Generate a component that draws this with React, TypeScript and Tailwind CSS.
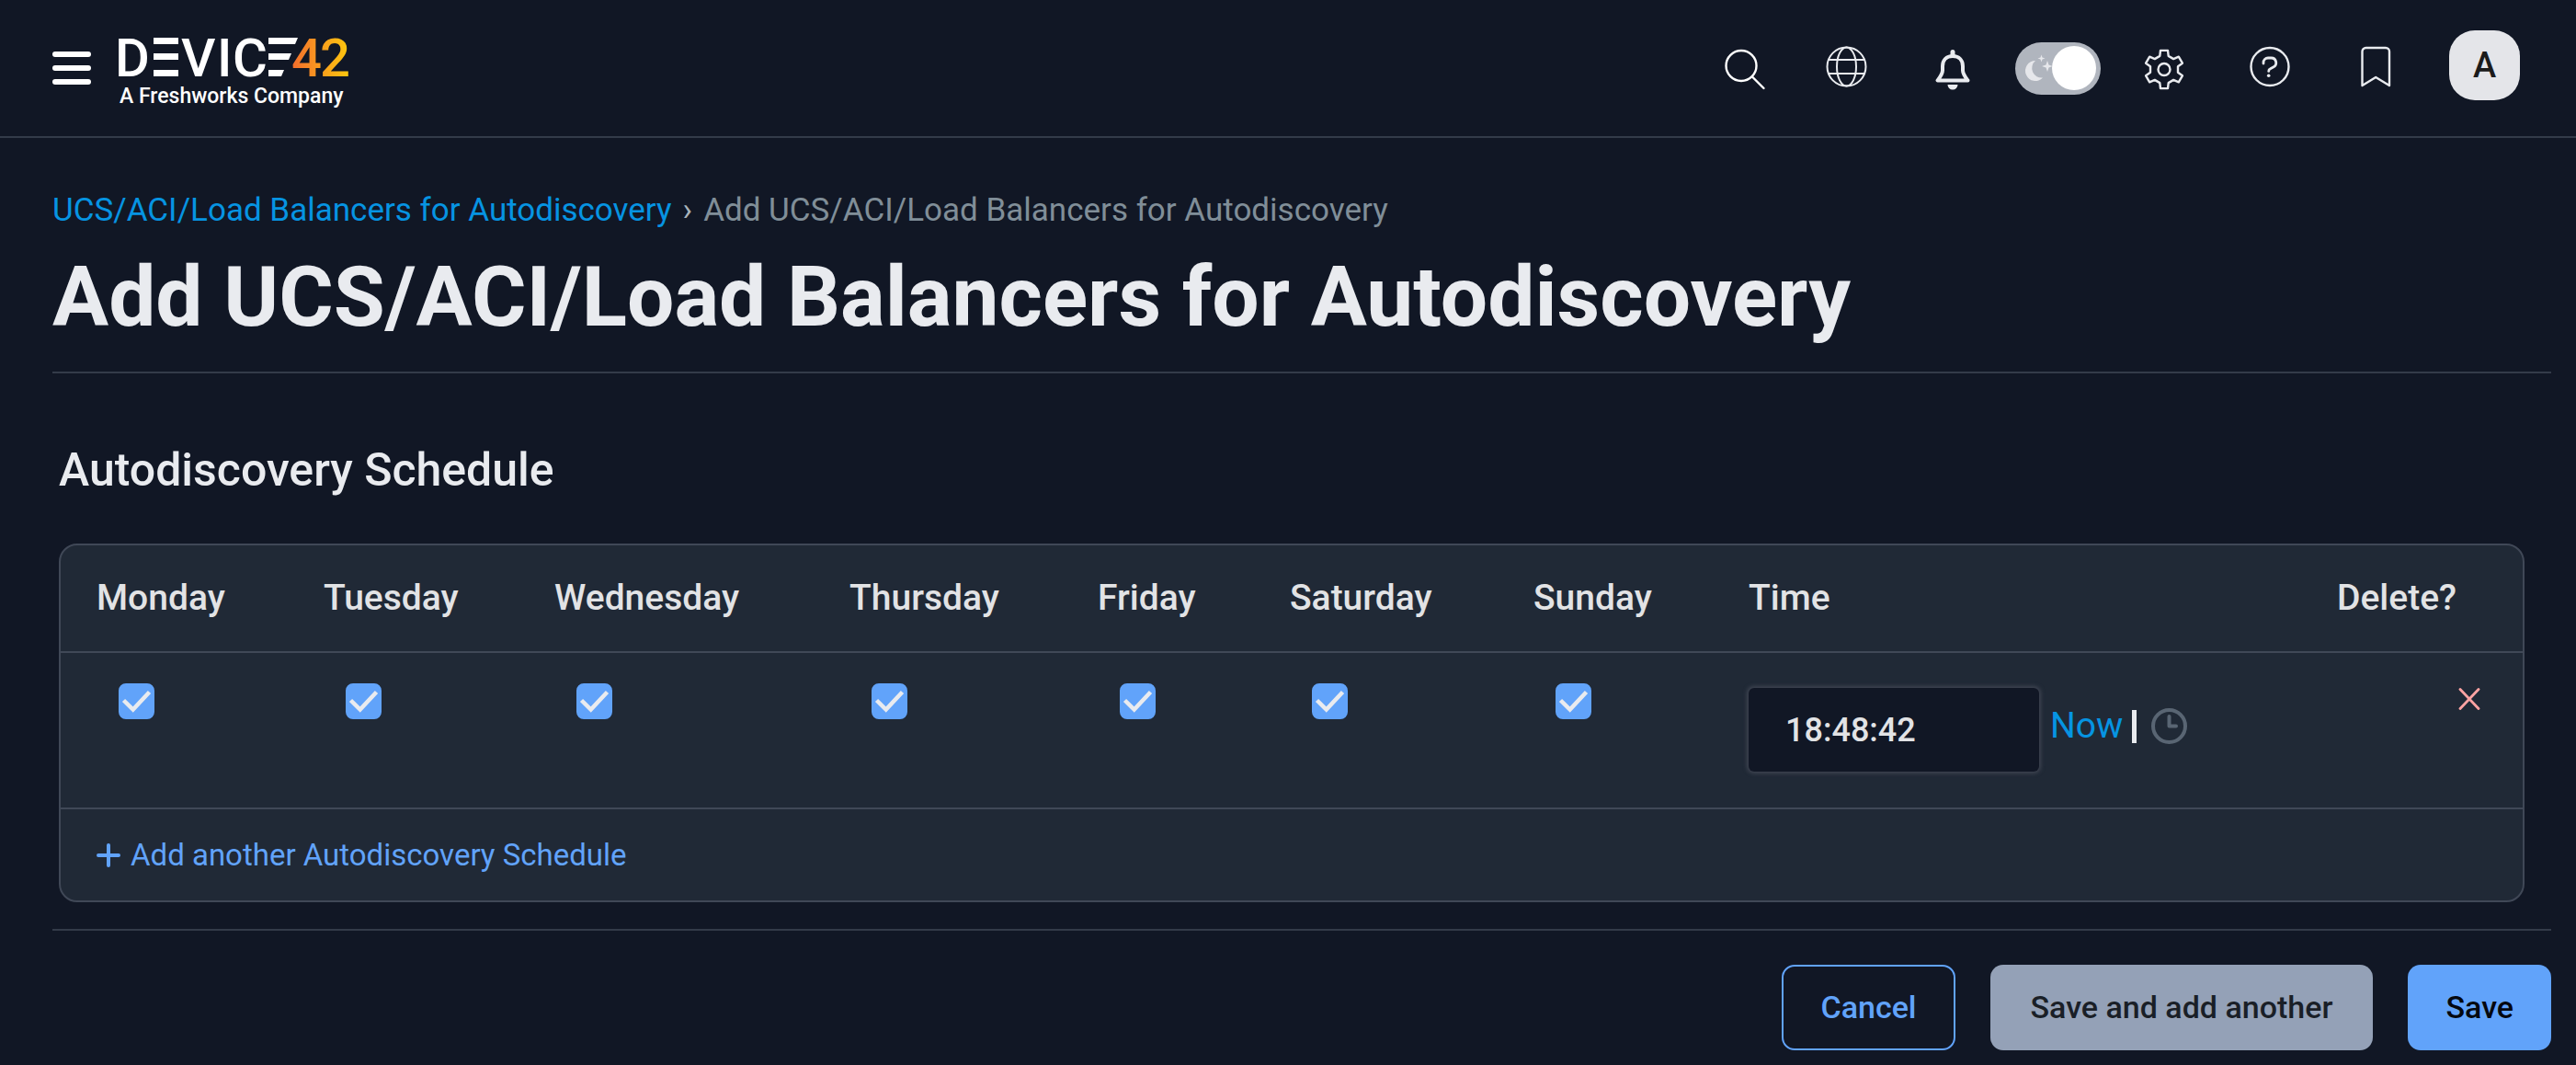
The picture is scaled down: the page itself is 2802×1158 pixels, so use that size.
import React, { useState } from 'react';

const days = [
  { name: 'Monday', col: 'w-[286px]' },
  { name: 'Tuesday', col: 'w-[251px]' },
  { name: 'Wednesday', col: 'w-[321px]' },
  { name: 'Thursday', col: 'w-[270px]' },
  { name: 'Friday', col: 'w-[209px]' },
  { name: 'Saturday', col: 'w-[265px]' },
  { name: 'Sunday', col: 'w-[234px]' },
];

// six-toothed gear outline, one tooth every 60 degrees
const gearPoints = [0, 60, 120, 180, 240, 300]
  .flatMap((a) => [
    [15.3, a - 18],
    [21, a - 11],
    [21, a + 11],
    [15.3, a + 18],
  ])
  .map(([r, deg]) => {
    const t = (deg * Math.PI) / 180;
    return `${(24 + r * Math.sin(t)).toFixed(1)},${(25.5 - r * Math.cos(t)).toFixed(1)}`;
  })
  .join(' ');

interface IconButtonProps {
  label: string;
  className?: string;
  children: React.ReactNode;
}

const IconButton: React.FC<IconButtonProps> = ({ label, className = 'w-[115px]', children }) => (
  <button type="button" aria-label={label} className={`flex justify-center text-[#e9ebef] ${className}`}>
    <svg width="48" height="48" viewBox="0 0 48 48" fill="none" stroke="currentColor" strokeLinecap="round" strokeLinejoin="round">
      {children}
    </svg>
  </button>
);

const Logo: React.FC = () => (
  <svg width="268" height="90" viewBox="-6 0 268 90" fill="#fff" role="img" aria-label="Device42, A Freshworks Company">
    <defs>
      <linearGradient id="digits" gradientUnits="userSpaceOnUse" x1="190" y1="0" x2="252" y2="0">
        <stop offset="0" stopColor="#f36f2c" />
        <stop offset="0.45" stopColor="#f99a1f" />
        <stop offset="1" stopColor="#fec90d" />
      </linearGradient>
    </defs>
    <g fontFamily="Roboto, sans-serif" fontWeight="500" fontSize="58">
      <text x="-4" y="54">D</text>
      <text x="68" y="54">V</text>
      <text x="107" y="54">I</text>
      <text x="124" y="54">C</text>
      <text x="188" y="54" fill="url(#digits)">4</text>
      <text x="219" y="54" fill="url(#digits)">2</text>
    </g>
    <path d="M38 12h27v7H38zM38 29h27v7H38zM38 47h27v7H38z" />
    <path d="M163 12h32l-3 7h-29zM163 29h25l-3 7h-22zM163 47h17l-3 7h-14z" />
    <text x="1" y="83" fontFamily="Roboto, sans-serif" fontWeight="500" fontSize="23">A Freshworks Company</text>
  </svg>
);

const Header: React.FC = () => {
  const [dark, setDark] = useState(true);

  return (
    <header className="flex h-[150px] items-center border-b-2 border-[#333b49] pl-[57px] pr-[38px]">
      <button type="button" aria-label="Menu" className="flex w-[42px] flex-col gap-[9px]">
        <span className="h-1.5 rounded-full bg-white" />
        <span className="h-1.5 rounded-full bg-white" />
        <span className="h-1.5 rounded-full bg-white" />
      </button>
      <a href="#" className="ml-6">
        <Logo />
      </a>

      <div className="ml-auto flex items-center">
        <IconButton label="Search" className="w-[107px]">
          <g stroke="#fff" strokeWidth="2.4">
            <circle cx="20" cy="21.5" r="16.5" />
            <path d="M32 33.5 44.5 46" />
          </g>
        </IconButton>
        <IconButton label="Language">
          <g strokeWidth="2">
            <circle cx="23.5" cy="22.5" r="21" />
            <ellipse cx="23.5" cy="22.5" rx="10.5" ry="21" />
            <path d="M4 15h39M4 30h39" />
          </g>
        </IconButton>
        <IconButton label="Notifications">
          <path
            strokeWidth="4"
            d="M24 11c-7 0-11 4.500-11 11v4.500c0 4-2.500 7-5.500 11h33c-3-4-5.500-7-5.500-11V22c0-6.500-4-11-11-11z"
          />
          <path fill="currentColor" stroke="none" d="M21.500 10V6.500a2.500 2.500 0 0 1 5 0V10zM18.500 42h11a5.500 5.500 0 0 1-11 0z" />
        </IconButton>

        <div className="flex w-[115px] justify-center">
          <button
            type="button"
            role="switch"
            aria-checked={dark}
            aria-label="Dark mode"
            onClick={() => setDark(!dark)}
            className="flex h-[57px] w-[93px] items-center rounded-full bg-[#b0b5be]"
          >
            <svg width="40" height="57" viewBox="0 0 40 57" fill="#e6e7eb">
              <path d="M22 20a11 11 0 1 0 8 18.500A10.500 10.500 0 0 1 22 20z" />
              <path d="M28.500 13.500l1 3 3 1-3 1-1 3-1-3-3-1 3-1zM35 20l1.500 4.500 4.500 1.500-4.500 1.500-1.500 4.500-1.500-4.500-4.500-1.500 4.500-1.500z" />
            </svg>
            <span className="size-12 rounded-full bg-white" />
          </button>
        </div>

        <IconButton label="Settings">
          <g strokeWidth="2.4">
            <polygon points={gearPoints} />
            <circle cx="24" cy="25.5" r="6.5" />
          </g>
        </IconButton>
        <IconButton label="Help">
          <circle cx="24" cy="22.5" r="20.5" strokeWidth="2.4" />
          <path strokeWidth="2.8" d="M17 19v-1a5 5 0 0 1 5-5h3.500a5.300 5.300 0 0 1 2.200 10.100L24.500 24.700a3 3 0 0 0-1.800 2.700" />
          <circle cx="22.7" cy="32.3" r="1.8" fill="currentColor" stroke="none" />
        </IconButton>
        <IconButton label="Bookmarks">
          <path strokeWidth="2.4" d="M9.500 43V6a4 4 0 0 1 4-4H35a4 4 0 0 1 4 4v37L24.200 34z" />
        </IconButton>

        <div className="flex w-[123px] justify-center pb-1.5">
          <button
            type="button"
            aria-label="Account"
            className="h-[76px] w-[77px] rounded-[28px] bg-[#e4e5e9] text-[38px] font-medium text-[#1b1b1b]"
          >
            A
          </button>
        </div>
      </div>
    </header>
  );
};

const DayCheckbox: React.FC<{ day: string }> = ({ day }) => {
  const [checked, setChecked] = useState(true);

  return (
    <span className="ml-6 grid size-[39px]">
      <input
        type="checkbox"
        aria-label={day}
        checked={checked}
        onChange={() => setChecked(!checked)}
        className="col-start-1 row-start-1 size-[39px] appearance-none rounded-lg border-2 border-[#61a3fa] checked:bg-[#61a3fa]"
      />
      {checked && (
        <svg viewBox="0 0 39 39" className="pointer-events-none col-start-1 row-start-1 size-[39px]" fill="none" stroke="#e9ebef" strokeWidth="4.5">
          <path d="M5.500 18.500 15.700 28.500 33.500 9.500" />
        </svg>
      )}
    </span>
  );
};

const ScheduleTable: React.FC = () => {
  const [time, setTime] = useState('18:48:42');

  return (
    <div className="overflow-hidden rounded-[20px] border-2 border-[#404857] bg-[#202936]">
      <table className="w-full table-fixed text-left">
        <colgroup>
          {days.map((day) => (
            <col key={day.name} className={day.col} />
          ))}
          <col />
          <col className="w-[202px]" />
        </colgroup>
        <thead>
          <tr className="h-[116px] border-b-2 border-[#404857] text-[39px] text-[#e2e3e5]">
            {days.map((day) => (
              <th key={day.name} scope="col" className="font-medium first:pl-[39px]">
                {day.name}
              </th>
            ))}
            <th scope="col" className="font-medium">Time</th>
            <th scope="col" className="font-medium">Delete?</th>
          </tr>
        </thead>
        <tbody>
          <tr className="h-[170px] border-b-2 border-[#404857] align-top">
            {days.map((day) => (
              <td key={day.name} className="pt-[33px] first:pl-[39px]">
                <DayCheckbox day={day.name} />
              </td>
            ))}
            <td className="pt-[38px]">
              <div className="flex items-center">
                <input
                  type="text"
                  aria-label="Time"
                  value={time}
                  onChange={(e) => setTime(e.target.value)}
                  className="h-[91px] w-[316px] rounded-md bg-[#111725] px-10 text-[36px] font-medium text-[#e2e3e5] shadow-[0_0_4px_2px_#3f4552]"
                />
                <div className="flex items-center pb-2">
                  <a
                    href="#"
                    onClick={() => setTime(new Date().toTimeString().slice(0, 8))}
                    className="ml-3 text-[39px] text-[#0694e2]"
                  >
                    Now
                  </a>
                  <span className="ml-2.5 h-9 w-[5px] bg-[#e9ebef]" />
                  <button type="button" aria-label="Choose a time" className="ml-4">
                    <svg width="39" height="39" viewBox="0 0 39 39" fill="none" stroke="#596573" strokeWidth="4" strokeLinecap="round" strokeLinejoin="round">
                      <circle cx="19.5" cy="19.5" r="17.5" />
                      <path d="M19.500 9v10.500H27" />
                    </svg>
                  </button>
                </div>
              </div>
            </td>
            <td className="pt-[38px] pr-[46px]">
              <button type="button" aria-label="Delete" className="ml-auto block">
                <svg width="24" height="24" viewBox="0 0 24 24" stroke="#ffa3a3" strokeWidth="2.8" strokeLinecap="round">
                  <path d="M2 1.500l20 21M22 1.500 2 22.500" />
                </svg>
              </button>
            </td>
          </tr>
        </tbody>
      </table>
      <a href="#" className="flex h-[99px] items-center gap-[11px] pl-[39px] text-[33px] text-[#61a3fa]">
        <svg width="26" height="26" viewBox="0 0 26 26" stroke="currentColor" strokeWidth="4" strokeLinecap="round">
          <path d="M13 2v22M2 13h22" />
        </svg>
        Add another Autodiscovery Schedule
      </a>
    </div>
  );
};

function App() {
  return (
    <div className="min-h-screen bg-[#111725] font-[Roboto,sans-serif]">
      <Header />
      <main className="pl-[57px] pr-[27px]">
        <nav aria-label="Breadcrumb" className="flex gap-3 pt-14 text-[35px] leading-[46px] text-[#808e98]">
          <a href="#" className="text-[#0694e2]">UCS/ACI/Load Balancers for Autodiscovery</a>
          <span className="text-[#a9b3bb]">›</span>
          <span>Add UCS/ACI/Load Balancers for Autodiscovery</span>
        </nav>
        <h1 className="h-[154px] border-b-2 border-[#333b49] pt-4 text-[91px] leading-[110px] font-bold text-[#e9ebef]">
          Add UCS/ACI/Load Balancers for Autodiscovery
        </h1>

        <section className="mt-[73px] pl-[7px] pr-[29px]">
          <h2 className="mb-12 text-[50px] leading-[64px] font-medium text-[#e9ebef]">Autodiscovery Schedule</h2>
          <ScheduleTable />
        </section>

        <div className="mt-[29px] flex justify-end gap-[38px] border-t-2 border-[#333b49] pt-[37px] text-[34px] font-medium">
          <button type="button" className="h-[93px] rounded-[14px] border-2 border-[#61a3fa] px-10 text-[#61a3fa]">Cancel</button>
          <button type="button" className="h-[93px] rounded-[14px] bg-[#94a1b7] px-11 text-[#1a1f27]">Save and add another</button>
          <button type="submit" className="h-[93px] rounded-[14px] bg-[#61a3fa] px-[41px] text-[#05080f]">Save</button>
        </div>
      </main>
    </div>
  );
}

export default App;
